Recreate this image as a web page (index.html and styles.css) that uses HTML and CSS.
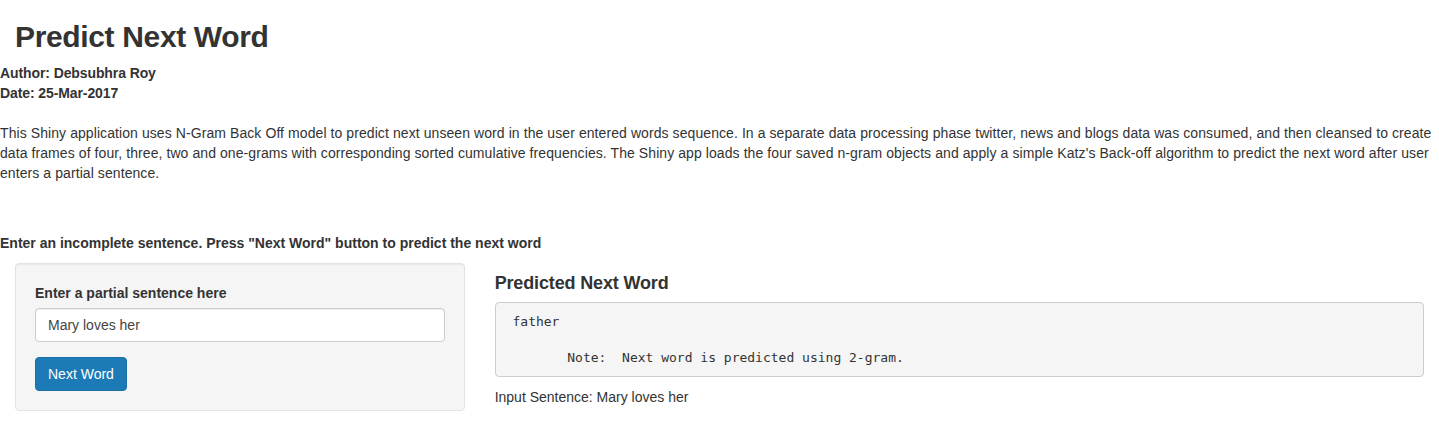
FILE: index.html
```html
<!DOCTYPE html>
<html>
<head>
<meta charset="utf-8">
<title>Predict Next Word</title>
<link rel="stylesheet" href="styles.css">
</head>
<body>
<div class="title-panel">
  <h2 class="title">Predict Next Word</h2>
</div>
<div class="meta">
  <strong>Author: Debsubhra Roy</strong><br>
  <strong>Date: 25-Mar-2017</strong>
</div>
<p class="intro">This Shiny application uses N-Gram Back Off model to predict next unseen word in the user entered words sequence. In a separate data processing phase twitter, news and blogs data was consumed, and then cleansed to create data frames of four, three, two and one-grams with corresponding sorted cumulative frequencies. The Shiny app loads the four saved n-gram objects and apply a simple Katz's Back-off algorithm to predict the next word after user enters a partial sentence.</p>
<div class="instruction"><strong>Enter an incomplete sentence. Press "Next Word" button to predict the next word</strong></div>
<div class="row">
  <div class="col-side">
    <form class="well">
      <div class="form-group">
        <label class="control-label" for="sentence">Enter a partial sentence here</label>
        <input id="sentence" class="form-control" type="text" value="Mary loves her">
      </div>
      <button type="button" class="btn-primary">Next Word</button>
    </form>
  </div>
  <div class="col-main">
    <h4 class="result-title">Predicted Next Word</h4>
    <pre class="output"> father

        Note:  Next word is predicted using 2-gram.</pre>
    <div class="input-echo">Input Sentence: Mary loves her</div>
  </div>
</div>
</body>
</html>
```

FILE: styles.css
```css
* {
  box-sizing: border-box;
}

html, body {
  margin: 0;
  padding: 0;
}

body {
  font-family: "Liberation Sans", Arial, Helvetica, sans-serif;
  font-size: 14px;
  line-height: 20px;
  color: #333333;
  background: #ffffff;
}

.title-panel {
  padding: 0 15px;
}

.title {
  margin: 20px 0 10px 0;
  font-size: 30px;
  line-height: 33px;
  font-weight: bold;
  letter-spacing: -0.35px;
  color: #333333;
}

.meta {
  line-height: 20px;
  letter-spacing: -0.1px;
}

.intro {
  margin: 20px 0 0 0;
  line-height: 20px;
  letter-spacing: 0.08px;
}

.instruction {
  margin-top: 50px;
  line-height: 20px;
}

.row {
  display: flex;
  margin-top: 10px;
}

.col-side {
  width: 33.3333%;
  padding: 0 15px;
}

.col-main {
  width: 66.6667%;
  padding: 0 15px;
}

.well {
  margin: 0;
  padding: 19px;
  background: #f5f5f5;
  border: 1px solid #e3e3e3;
  border-radius: 4px;
  box-shadow: inset 0 1px 1px rgba(0, 0, 0, 0.05);
}

.form-group {
  margin-bottom: 15px;
}

.control-label {
  display: block;
  font-weight: bold;
  margin-bottom: 5px;
  line-height: 20px;
}

.form-control {
  display: block;
  width: 100%;
  height: 34px;
  padding: 6px 12px;
  font-family: "Liberation Sans", Arial, Helvetica, sans-serif;
  font-size: 14px;
  line-height: 20px;
  color: #444444;
  background: #ffffff;
  border: 1px solid #cccccc;
  border-radius: 4px;
  box-shadow: inset 0 1px 1px rgba(0, 0, 0, 0.075);
}

.btn-primary {
  display: block;
  height: 34px;
  padding: 6px 12px;
  font-family: "Liberation Sans", Arial, Helvetica, sans-serif;
  font-size: 14px;
  line-height: 20px;
  color: #ffffff;
  background: #1c7bb6;
  border: 1px solid #1a6fa5;
  border-radius: 4px;
  cursor: pointer;
}

.result-title {
  margin: 10px 0 9px 0;
  font-size: 18px;
  line-height: 20px;
  font-weight: bold;
  letter-spacing: -0.15px;
  color: #333333;
}

.output {
  margin: 0 0 10px 0;
  padding: 10px 9px 9px 9px;
  font-family: "DejaVu Sans Mono", "Liberation Mono", monospace;
  font-size: 13px;
  line-height: 18px;
  color: #333333;
  background: #f5f5f5;
  border: 1px solid #cccccc;
  border-radius: 4px;
  white-space: pre;
}

.input-echo {
  line-height: 20px;
}
```
